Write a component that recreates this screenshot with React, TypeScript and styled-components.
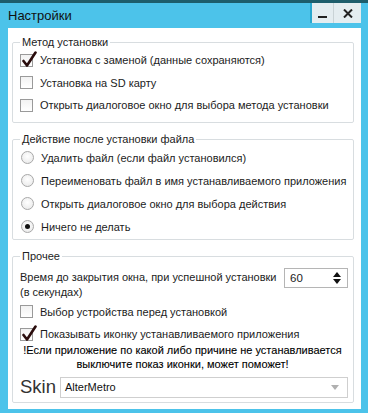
import React from "react";
import styled, { createGlobalStyle } from "styled-components";

const Global = createGlobalStyle`
  html, body { margin: 0; padding: 0; background: #4cc3ea; }
  body { font-family: "Liberation Sans", Arial, sans-serif; font-size: 11px; color: #1c1c1c; }
  * { box-sizing: border-box; }
`;

const Window = styled.div`
  width: 368px;
  height: 413px;
  background: #4cc3ea;
  border-top: 3px solid #1d5e6c;
  display: flex;
  flex-direction: column;
`;

const TitleBar = styled.div`
  height: 25px;
  display: flex;
  align-items: flex-start;
  justify-content: space-between;
`;

const Title = styled.div`
  font-size: 13px;
  line-height: 25px;
  padding-left: 8px;
  color: #111;
`;

const Buttons = styled.div`
  display: flex;
  margin-right: 7px;
  height: 20px;
  border-left: 2px solid #2aa8cf;
`;

const TitleButton = styled.div<{ $wide?: boolean }>`
  width: ${(p) => (p.$wide ? 28 : 21)}px;
  height: 20px;
  background: #e4edf0;
  display: flex;
  align-items: center;
  justify-content: center;
  border-left: ${(p) => (p.$wide ? "1px solid #c9d3d6" : "none")};
`;

const Client = styled.div`
  flex: 1;
  background: #ffffff;
  margin: 0 7px 6px 8px;
  padding: 7px 7px 6px 4px;
  display: flex;
  flex-direction: column;
  gap: 9px;
`;

const Group = styled.fieldset<{ $pb: number }>`
  margin: 0;
  padding: 0 0 ${(p) => p.$pb}px 7px;
  border: 1px solid #d8dde0;
  border-radius: 2px;
  min-width: 0;
`;

const Legend = styled.legend`
  padding: 0 2px;
  margin-left: 0;
  height: 14px;
  line-height: 14px;
  font-size: 11px;
  color: #222;
`;

const Row = styled.div<{ $h: number }>`
  height: ${(p) => p.$h}px;
  display: flex;
  align-items: center;
  gap: 7px;
  white-space: nowrap;
`;

const Box = styled.span`
  position: relative;
  width: 13px;
  height: 13px;
  border: 1px solid #9a9a9a;
  background: linear-gradient(#f2f2f2, #ffffff);
  flex: none;
`;

const Check = styled.svg`
  position: absolute;
  left: 1px;
  top: -4px;
`;

const Radio = styled.span<{ $on?: boolean }>`
  width: 13px;
  height: 13px;
  border-radius: 50%;
  border: 1px solid #a8a8a8;
  background: radial-gradient(circle at 50% 40%, #ffffff, #e6e6e6);
  flex: none;
  margin-left: 1px;
  display: flex;
  align-items: center;
  justify-content: center;
  &::after {
    content: "";
    display: ${(p) => (p.$on ? "block" : "none")};
    width: 5px;
    height: 5px;
    border-radius: 50%;
    background: #111;
  }
`;

const TimeRow = styled.div`
  display: flex;
  align-items: flex-start;
  justify-content: space-between;
  padding-top: 7px;
  padding-right: 5px;
`;

const TimeText = styled.div`
  line-height: 15px;
  white-space: nowrap;
`;

const Spin = styled.div`
  width: 64px;
  height: 20px;
  border: 1px solid #b5b5b5;
  display: flex;
  align-items: center;
  justify-content: space-between;
  padding: 0 6px 0 5px;
  margin-top: -2px;
  font-size: 11.5px;
`;

const Arrows = styled.div`
  display: flex;
  flex-direction: column;
  gap: 2px;
`;

const Warning = styled.div`
  text-align: center;
  line-height: 14px;
  color: #000;
  font-size: 11px;
  white-space: nowrap;
  padding-right: 8px;
  margin-top: -2px;
  -webkit-text-stroke: 0.1px #000;
`;

const SkinRow = styled.div`
  display: flex;
  align-items: center;
  gap: 4px;
  padding: 5px 5px 0 0;
`;

const SkinLabel = styled.div`
  font-size: 18.5px;
  color: #333;
  line-height: 22px;
`;

const Combo = styled.div`
  flex: 1;
  height: 21px;
  border: 1px solid #cfcfcf;
  display: flex;
  align-items: center;
  justify-content: space-between;
  padding: 0 8px 0 4px;
  font-size: 11px;
  color: #111;
`;

const CheckMark = () => (
  <Check width="15" height="17" viewBox="0 0 15 17">
    <path d="M1.5 10 L5 14.5 L13.5 1.5" fill="none" stroke="#2a0c0c" strokeWidth="2.6" strokeLinecap="round" strokeLinejoin="round" />
  </Check>
);

const CheckBox = ({ checked }: { checked?: boolean }) => <Box>{checked && <CheckMark />}</Box>;

export default function App() {
  return (
    <>
      <Global />
      <Window>
        <TitleBar>
          <Title>Настройки</Title>
          <Buttons>
            <TitleButton>
              <svg width="9" height="10" viewBox="0 0 9 10">
                <rect x="0" y="8" width="9" height="2" fill="#222" />
              </svg>
            </TitleButton>
            <TitleButton $wide>
              <svg width="10" height="9" viewBox="0 0 10 9">
                <path d="M1 0.5 L9 8.5 M9 0.5 L1 8.5" stroke="#222" strokeWidth="2" />
              </svg>
            </TitleButton>
          </Buttons>
        </TitleBar>
        <Client>
          <Group $pb={6}>
            <Legend>Метод установки</Legend>
            <Row $h={22}>
              <CheckBox checked />
              Установка с заменой (данные сохраняются)
            </Row>
            <Row $h={23}>
              <CheckBox />
              Установка на SD карту
            </Row>
            <Row $h={22}>
              <CheckBox />
              Открыть диалоговое окно для выбора метода установки
            </Row>
          </Group>
          <Group $pb={1}>
            <Legend>Действие после установки файла</Legend>
            <Row $h={23}>
              <Radio />
              Удалить файл (если файл установился)
            </Row>
            <Row $h={23}>
              <Radio />
              Переименовать файл в имя устанавливаемого приложения
            </Row>
            <Row $h={23}>
              <Radio />
              Открыть диалоговое окно для выбора действия
            </Row>
            <Row $h={23}>
              <Radio $on />
              Ничего не делать
            </Row>
          </Group>
          <Group $pb={4}>
            <Legend>Прочее</Legend>
            <TimeRow>
              <TimeText>
                Время до закрытия окна, при успешной установки
                <br />
                (в секундах)
              </TimeText>
              <Spin>
                60
                <Arrows>
                  <svg width="8" height="5" viewBox="0 0 8 5">
                    <path d="M0 5 L4 0 L8 5 Z" fill="#111" />
                  </svg>
                  <svg width="8" height="5" viewBox="0 0 8 5">
                    <path d="M0 0 L4 5 L8 0 Z" fill="#111" />
                  </svg>
                </Arrows>
              </Spin>
            </TimeRow>
            <Row $h={23}>
              <CheckBox />
              Выбор устройства перед установкой
            </Row>
            <Row $h={22}>
              <CheckBox checked />
              Показывать иконку устанавливаемого приложения
            </Row>
            <Warning>
              !Если приложение по какой либо причине не устанавливается
              <br />
              выключите показ иконки, может поможет!
            </Warning>
            <SkinRow>
              <SkinLabel>Skin</SkinLabel>
              <Combo>
                AlterMetro
                <svg width="8" height="5" viewBox="0 0 8 5">
                  <path d="M0 0 L4 5 L8 0 Z" fill="#b0b0b0" />
                </svg>
              </Combo>
            </SkinRow>
          </Group>
        </Client>
      </Window>
    </>
  );
}
